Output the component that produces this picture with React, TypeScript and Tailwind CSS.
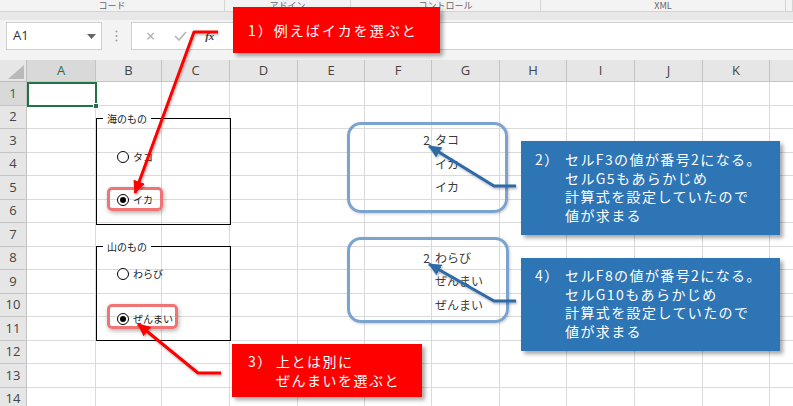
import React from "react";

const JP = { fontFamily: '"Noto Sans CJK JP", "Noto Sans", sans-serif' };
const UI = { fontFamily: '"Open Sans", "Noto Sans CJK JP", sans-serif' };

const cols = [
  { l: "A", w: 69 },
  { l: "B", w: 66 },
  { l: "C", w: 68 },
  { l: "D", w: 68 },
  { l: "E", w: 67 },
  { l: "F", w: 67 },
  { l: "G", w: 68 },
  { l: "H", w: 67 },
  { l: "I", w: 68 },
  { l: "J", w: 68 },
  { l: "K", w: 67 },
  { l: "L", w: 67 },
];

const cells: Record<string, { t: string; right?: boolean }> = {
  F3: { t: "2", right: true },
  G3: { t: "タコ" },
  G4: { t: "イカ" },
  G5: { t: "イカ" },
  F8: { t: "2", right: true },
  G8: { t: "わらび" },
  G9: { t: "ぜんまい" },
  G10: { t: "ぜんまい" },
};

function Radio({ checked }: { checked?: boolean }) {
  return (
    <div className="w-[12px] h-[12px] rounded-full border border-black bg-white flex items-center justify-center shrink-0">
      {checked && <div className="w-[6px] h-[6px] rounded-full bg-black" />}
    </div>
  );
}

function GroupBox({
  left,
  top,
  w,
  h,
  label,
  children,
}: {
  left: number;
  top: number;
  w: number;
  h: number;
  label: string;
  children: React.ReactNode;
}) {
  return (
    <div
      className="absolute border border-black"
      style={{ left, top, width: w, height: h }}
    >
      <div
        className="absolute top-[-6px] left-[6px] px-[4px] bg-white text-[10px] leading-[12px] text-[#222]"
        style={JP}
      >
        {label}
      </div>
      {children}
    </div>
  );
}

export default function App() {
  return (
    <div
      className="relative w-[793px] h-[406px] overflow-hidden bg-white"
      style={UI}
    >
      {/* Ribbon group labels */}
      <div className="flex h-[12px] bg-[#f3f3f3] border-b border-[#d4d4d4]">
        {[
          { t: "コード", w: 225 },
          { t: "アドイン", w: 126 },
          { t: "コントロール", w: 190 },
          { t: "XML", w: 245 },
          { t: "", w: 7 },
        ].map((g, i) => (
          <div
            key={i}
            className="flex justify-center items-start border-r border-[#d4d4d4] text-[9px] leading-[11px] text-[#666]"
            style={{ width: g.w, ...JP }}
          >
            {g.t}
          </div>
        ))}
      </div>
      <div className="h-[8px] bg-[#e8e8e8]" />
      {/* Formula bar */}
      <div className="h-[40px] bg-[#f3f3f3] flex items-start pt-[2px]">
        <div className="ml-[6px] w-[96px] h-[28px] bg-white border border-[#d0d0d0] flex items-center pl-[6px] pr-[5px] text-[13px] text-[#333]">
          <span className="flex-1">A1</span>
          <svg width="9" height="5" viewBox="0 0 9 5">
            <path d="M0 0 L9 0 L4.5 5 Z" fill="#666" />
          </svg>
        </div>
        <div className="w-[29px] h-[28px] flex items-center justify-center">
          <svg width="3" height="12" viewBox="0 0 3 12">
            <circle cx="1.5" cy="1.5" r="1" fill="#9a9a9a" />
            <circle cx="1.5" cy="6" r="1" fill="#9a9a9a" />
            <circle cx="1.5" cy="10.5" r="1" fill="#9a9a9a" />
          </svg>
        </div>
        <div className="flex-1 h-[28px] bg-white border border-[#d0d0d0] border-r-0 flex items-center">
          <span className="ml-[14px] text-[16px] text-[#a8a8a8] leading-none">×</span>
          <svg className="ml-[19px]" width="13" height="10" viewBox="0 0 13 10">
            <path d="M1 5 L5 9 L12 1" stroke="#b5b5b5" strokeWidth="1.6" fill="none" />
          </svg>
          <span
            className="ml-[18px] text-[11px] italic font-bold text-[#444] leading-none"
            style={{ fontFamily: '"Liberation Serif", serif' }}
          >
            fx
          </span>
        </div>
      </div>
      {/* Sheet grid */}
      <div
        className="grid grid-cols-[27px_69px_66px_68px_68px_67px_67px_68px_67px_68px_68px_67px_67px] grid-rows-[22px_repeat(14,23.5px)]"
      >
        <div className="relative bg-[#e6e6e6] border-r border-b border-[#bcbcbc]">
          <svg className="absolute right-[2px] bottom-[2px]" width="16" height="14" viewBox="0 0 16 14">
            <path d="M16 0 L16 14 L0 14 Z" fill="#b9b9b9" />
          </svg>
        </div>
        {cols.map((c, i) => (
          <div
            key={c.l}
            className={`flex items-center justify-center text-[13px] border-r border-b border-[#c4c4c4] ${
              i === 0 ? "bg-[#d9d9d9] text-[#217346]" : "bg-[#e6e6e6] text-[#444]"
            }`}
          >
            {c.l === "L" ? "" : c.l}
          </div>
        ))}
        {Array.from({ length: 14 }, (_, r) => (
          <React.Fragment key={r}>
            <div
              className={`flex items-center justify-center text-[13px] border-r border-b border-[#c4c4c4] ${
                r === 0 ? "bg-[#d9d9d9] text-[#217346]" : "bg-[#e6e6e6] text-[#444]"
              }`}
            >
              {r + 1}
            </div>
            {cols.map((c) => {
              const key = `${c.l}${r + 1}`;
              const cell = cells[key];
              return (
                <div
                  key={key}
                  className={`flex items-center border-r border-b border-[#dadada] text-[12px] text-[#3a3a3a] whitespace-nowrap ${
                    cell?.right ? "justify-end pr-[1px]" : "pl-[3px]"
                  }`}
                  style={JP}
                >
                  {cell?.t}
                </div>
              );
            })}
          </React.Fragment>
        ))}
      </div>

      {/* Active cell A1 */}
      <div className="absolute left-[27px] top-[82px] w-[70px] h-[25px] border-2 border-[#217346]" />
      <div className="absolute left-[93px] top-[103px] w-[6px] h-[6px] bg-[#217346] border border-white" />

      {/* Group box 1 */}
      <GroupBox left={96} top={118} w={135} h={107} label="海のもの">
        <div className="absolute left-[20px] top-[30px] flex items-center gap-[4px] text-[10px] text-[#222]" style={JP}>
          <Radio />
          <span>タコ</span>
        </div>
        <div className="absolute left-[20px] top-[73px] flex items-center gap-[4px] text-[10px] text-[#222]" style={JP}>
          <Radio checked />
          <span>イカ</span>
        </div>
      </GroupBox>
      <div className="absolute left-[107px] top-[187px] w-[56px] h-[24px] rounded-[5px] border-[3px] border-[#f07474] shadow-[1px_2px_4px_rgba(0,0,0,0.3)]" />

      {/* Group box 2 */}
      <GroupBox left={96} top={246} w={135} h={95} label="山のもの">
        <div className="absolute left-[20px] top-[19px] flex items-center gap-[4px] text-[10px] text-[#222]" style={JP}>
          <Radio />
          <span>わらび</span>
        </div>
        <div className="absolute left-[20px] top-[64px] flex items-center gap-[4px] text-[10px] text-[#222]" style={JP}>
          <Radio checked />
          <span>ぜんまい</span>
        </div>
      </GroupBox>
      <div className="absolute left-[107px] top-[304px] w-[71px] h-[25px] rounded-[5px] border-[3px] border-[#f07474] shadow-[1px_2px_4px_rgba(0,0,0,0.3)]" />

      {/* Blue rounded rectangles */}
      <div className="absolute left-[347px] top-[122px] w-[161px] h-[91px] rounded-[14px] border-[3px] border-[#7aa3cf] shadow-[1px_1px_3px_rgba(0,0,0,0.2)]" />
      <div className="absolute left-[347px] top-[237px] w-[162px] h-[86px] rounded-[14px] border-[3px] border-[#7aa3cf] shadow-[1px_1px_3px_rgba(0,0,0,0.2)]" />

      {/* Red callout 1 */}
      <div
        className="absolute left-[233px] top-[7px] w-[207px] h-[46px] bg-[#ff0000] flex items-center pl-[15px] text-white text-[14px] tracking-[2px] shadow-[3px_3px_4px_rgba(0,0,0,0.35)]"
        style={JP}
      >
        1）例えばイカを選ぶと
      </div>

      {/* Red callout 3 */}
      <div
        className="absolute left-[232px] top-[344px] w-[190px] h-[53px] bg-[#ff0000] flex pl-[16px] pt-[8px] text-white text-[14px] leading-[19px] tracking-[1.5px] shadow-[3px_3px_4px_rgba(0,0,0,0.35)]"
        style={JP}
      >
        <span className="w-[28px] shrink-0">3）</span>
        <div className="flex flex-col">
          <span>上とは別に</span>
          <span>ぜんまいを選ぶと</span>
        </div>
      </div>

      {/* Blue callout 2 */}
      <div
        className="absolute left-[521px] top-[141px] w-[259px] h-[94px] bg-[#2e75b6] flex pl-[14px] pt-[9px] text-white text-[14px] leading-[18.7px] tracking-[1.4px] shadow-[3px_3px_4px_rgba(0,0,0,0.35)]"
        style={JP}
      >
        <span className="w-[30px] shrink-0">2）</span>
        <div className="flex flex-col whitespace-nowrap">
          <span>セルF3の値が番号2になる。</span>
          <span>セルG5もあらかじめ</span>
          <span>計算式を設定していたので</span>
          <span>値が求まる</span>
        </div>
      </div>

      {/* Blue callout 4 */}
      <div
        className="absolute left-[521px] top-[258px] w-[259px] h-[93px] bg-[#2e75b6] flex pl-[14px] pt-[8px] text-white text-[14px] leading-[18.7px] tracking-[1.4px] shadow-[3px_3px_4px_rgba(0,0,0,0.35)]"
        style={JP}
      >
        <span className="w-[30px] shrink-0">4）</span>
        <div className="flex flex-col whitespace-nowrap">
          <span>セルF8の値が番号2になる。</span>
          <span>セルG10もあらかじめ</span>
          <span>計算式を設定していたので</span>
          <span>値が求まる</span>
        </div>
      </div>

      {/* Arrows */}
      <svg className="absolute left-0 top-0 pointer-events-none" width="793" height="406" viewBox="0 0 793 406">
        <defs>
          <marker id="redHead" markerUnits="userSpaceOnUse" markerWidth="14" markerHeight="12" refX="12" refY="6" orient="auto">
            <path d="M0 0 L13 6 L0 12 Z" fill="#ff0000" />
          </marker>
          <marker id="blueHead" markerUnits="userSpaceOnUse" markerWidth="14" markerHeight="12" refX="12" refY="6" orient="auto">
            <path d="M0 0 L13 6 L0 12 Z" fill="#2e6aa5" />
          </marker>
          <filter id="sh" x="-20%" y="-20%" width="140%" height="140%">
            <feDropShadow dx="1" dy="1.5" stdDeviation="1" floodColor="#000" floodOpacity="0.3" />
          </filter>
        </defs>
        <polyline
          points="218,32 194,32 135,193"
          fill="none"
          stroke="#ff0000"
          strokeWidth="3"
          strokeLinejoin="round"
          markerEnd="url(#redHead)"
          filter="url(#sh)"
        />
        <polyline
          points="221,373 198,373 138,324"
          fill="none"
          stroke="#ff0000"
          strokeWidth="3"
          strokeLinejoin="round"
          markerEnd="url(#redHead)"
          filter="url(#sh)"
        />
        <polyline
          points="516,186 494,186 429,146"
          fill="none"
          stroke="#2e6aa5"
          strokeWidth="3"
          strokeLinejoin="round"
          markerEnd="url(#blueHead)"
          filter="url(#sh)"
        />
        <polyline
          points="516,301 494,301 429,264"
          fill="none"
          stroke="#2e6aa5"
          strokeWidth="3"
          strokeLinejoin="round"
          markerEnd="url(#blueHead)"
          filter="url(#sh)"
        />
      </svg>
    </div>
  );
}
